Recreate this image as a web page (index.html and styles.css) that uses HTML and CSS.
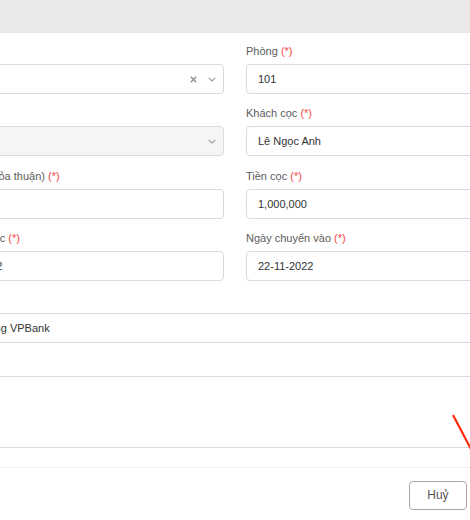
FILE: index.html
```html
<!DOCTYPE html>
<html lang="vi">
<head>
<meta charset="utf-8">
<title>Thêm đặt cọc</title>
<link rel="stylesheet" href="styles.css">
</head>
<body>
<div class="modal">
  <div class="modal-header"><span class="modal-title">Thêm đặt cọc</span></div>
  <div class="modal-body">
    <form class="form-grid">
      <div class="item">
        <label class="label">Nhà <span class="req">(*)</span></label>
        <div class="control select">
          <span class="value">Tòa A</span>
          <span class="icons">
            <svg class="ic-clear" width="7" height="7" viewBox="0 0 7 7"><path d="M0.8 0.8L6.2 6.2M6.2 0.8L0.8 6.2" stroke="#8c8c8c" stroke-width="1.3" fill="none"/></svg>
            <svg class="ic-chev" width="8" height="5" viewBox="0 0 8 5"><path d="M0.7 0.8L4 4L7.3 0.8" stroke="#9a9a9a" stroke-width="1.1" fill="none"/></svg>
          </span>
        </div>
      </div>
      <div class="item">
        <label class="label">Phòng <span class="req">(*)</span></label>
        <div class="control">101</div>
      </div>
      <div class="item">
        <label class="label">Loại phòng</label>
        <div class="control select disabled">
          <span class="value">Thường</span>
          <span class="icons">
            <svg class="ic-chev" width="8" height="5" viewBox="0 0 8 5"><path d="M0.7 0.8L4 4L7.3 0.8" stroke="#9a9a9a" stroke-width="1.1" fill="none"/></svg>
          </span>
        </div>
      </div>
      <div class="item">
        <label class="label">Khách cọc <span class="req">(*)</span></label>
        <div class="control">Lê Ngọc Anh</div>
      </div>
      <div class="item">
        <label class="label">Giá thuê (thỏa thuận) <span class="req">(*)</span></label>
        <div class="control"></div>
      </div>
      <div class="item">
        <label class="label">Tiền cọc <span class="req">(*)</span></label>
        <div class="control">1,000,000</div>
      </div>
      <div class="item">
        <label class="label">Ngày đặt cọc <span class="req">(*)</span></label>
        <div class="control date-left">22-11-2022</div>
      </div>
      <div class="item">
        <label class="label">Ngày chuyển vào <span class="req">(*)</span></label>
        <div class="control">22-11-2022</div>
      </div>
      <div class="item full">
        <label class="label">Hình thức</label>
        <div class="control">Ngân hàng VPBank</div>
      </div>
      <div class="item full">
        <label class="label">Ghi chú</label>
        <div class="control textarea"></div>
      </div>
    </form>
  </div>
  <div class="modal-footer">
    <button class="btn" type="button">Huỷ</button>
    <button class="btn btn-primary" type="button">Lưu</button>
  </div>
</div>
<svg class="annotation" width="24" height="42" viewBox="0 0 24 42"><path d="M3 3L22 39" stroke="#ff2d0f" stroke-width="2.2" fill="none"/></svg>
</body>
</html>
```

FILE: styles.css
```css
* { box-sizing: border-box; }
html, body { margin: 0; padding: 0; }
body {
  width: 470px;
  height: 520px;
  overflow: hidden;
  background: #fff;
  font-family: "Liberation Sans", Arial, sans-serif;
}
.modal {
  margin-left: -83px;
  width: 636px;
  background: #fff;
}
.modal-header {
  height: 33px;
  background: #e9e9e9;
  display: flex;
  align-items: center;
  padding-left: 2px;
}
.modal-title {
  font-size: 13px;
  color: #3d3d55;
}
.modal-body {
  padding: 9px 24px 9px;
}
.form-grid {
  display: grid;
  grid-template-columns: 283px 283px;
  column-gap: 22px;
}
.item {
  display: flex;
  flex-direction: column;
  margin-bottom: 10.33px;
}
.item.full { grid-column: 1 / -1; }
.label {
  font-size: 11px;
  line-height: 18px;
  color: #5c5c5c;
  margin-bottom: 4px;
}
.req { color: #f5484b; }
.control {
  height: 30px;
  border: 1px solid #dadae2;
  border-radius: 4px;
  padding: 0 11px;
  display: flex;
  align-items: center;
  font-size: 11px;
  color: #333;
  background: #fff;
  white-space: nowrap;
}
.control.select { padding-right: 7px; }
.control.disabled { background: #f5f5f5; }
.control.date-left { padding-left: 5px; }
.icons {
  margin-left: auto;
  display: flex;
  align-items: center;
  gap: 11px;
}
.icons svg { display: block; }
.control.textarea { height: 72px; }
.modal-footer {
  border-top: 1px solid #f0f0f0;
  padding: 13px 21px 20px 24px;
  display: flex;
  justify-content: flex-end;
  gap: 8px;
}
.btn {
  height: 29px;
  padding: 0 17px;
  border: 1px solid #a8a8a8;
  border-radius: 4px;
  background: #fff;
  color: #555;
  font-family: "Liberation Sans", Arial, sans-serif;
  font-size: 12px;
}
.btn-primary {
  background: #1890ff;
  border-color: #1890ff;
  color: #fff;
}
.annotation {
  position: absolute;
  left: 450px;
  top: 412px;
}
```
